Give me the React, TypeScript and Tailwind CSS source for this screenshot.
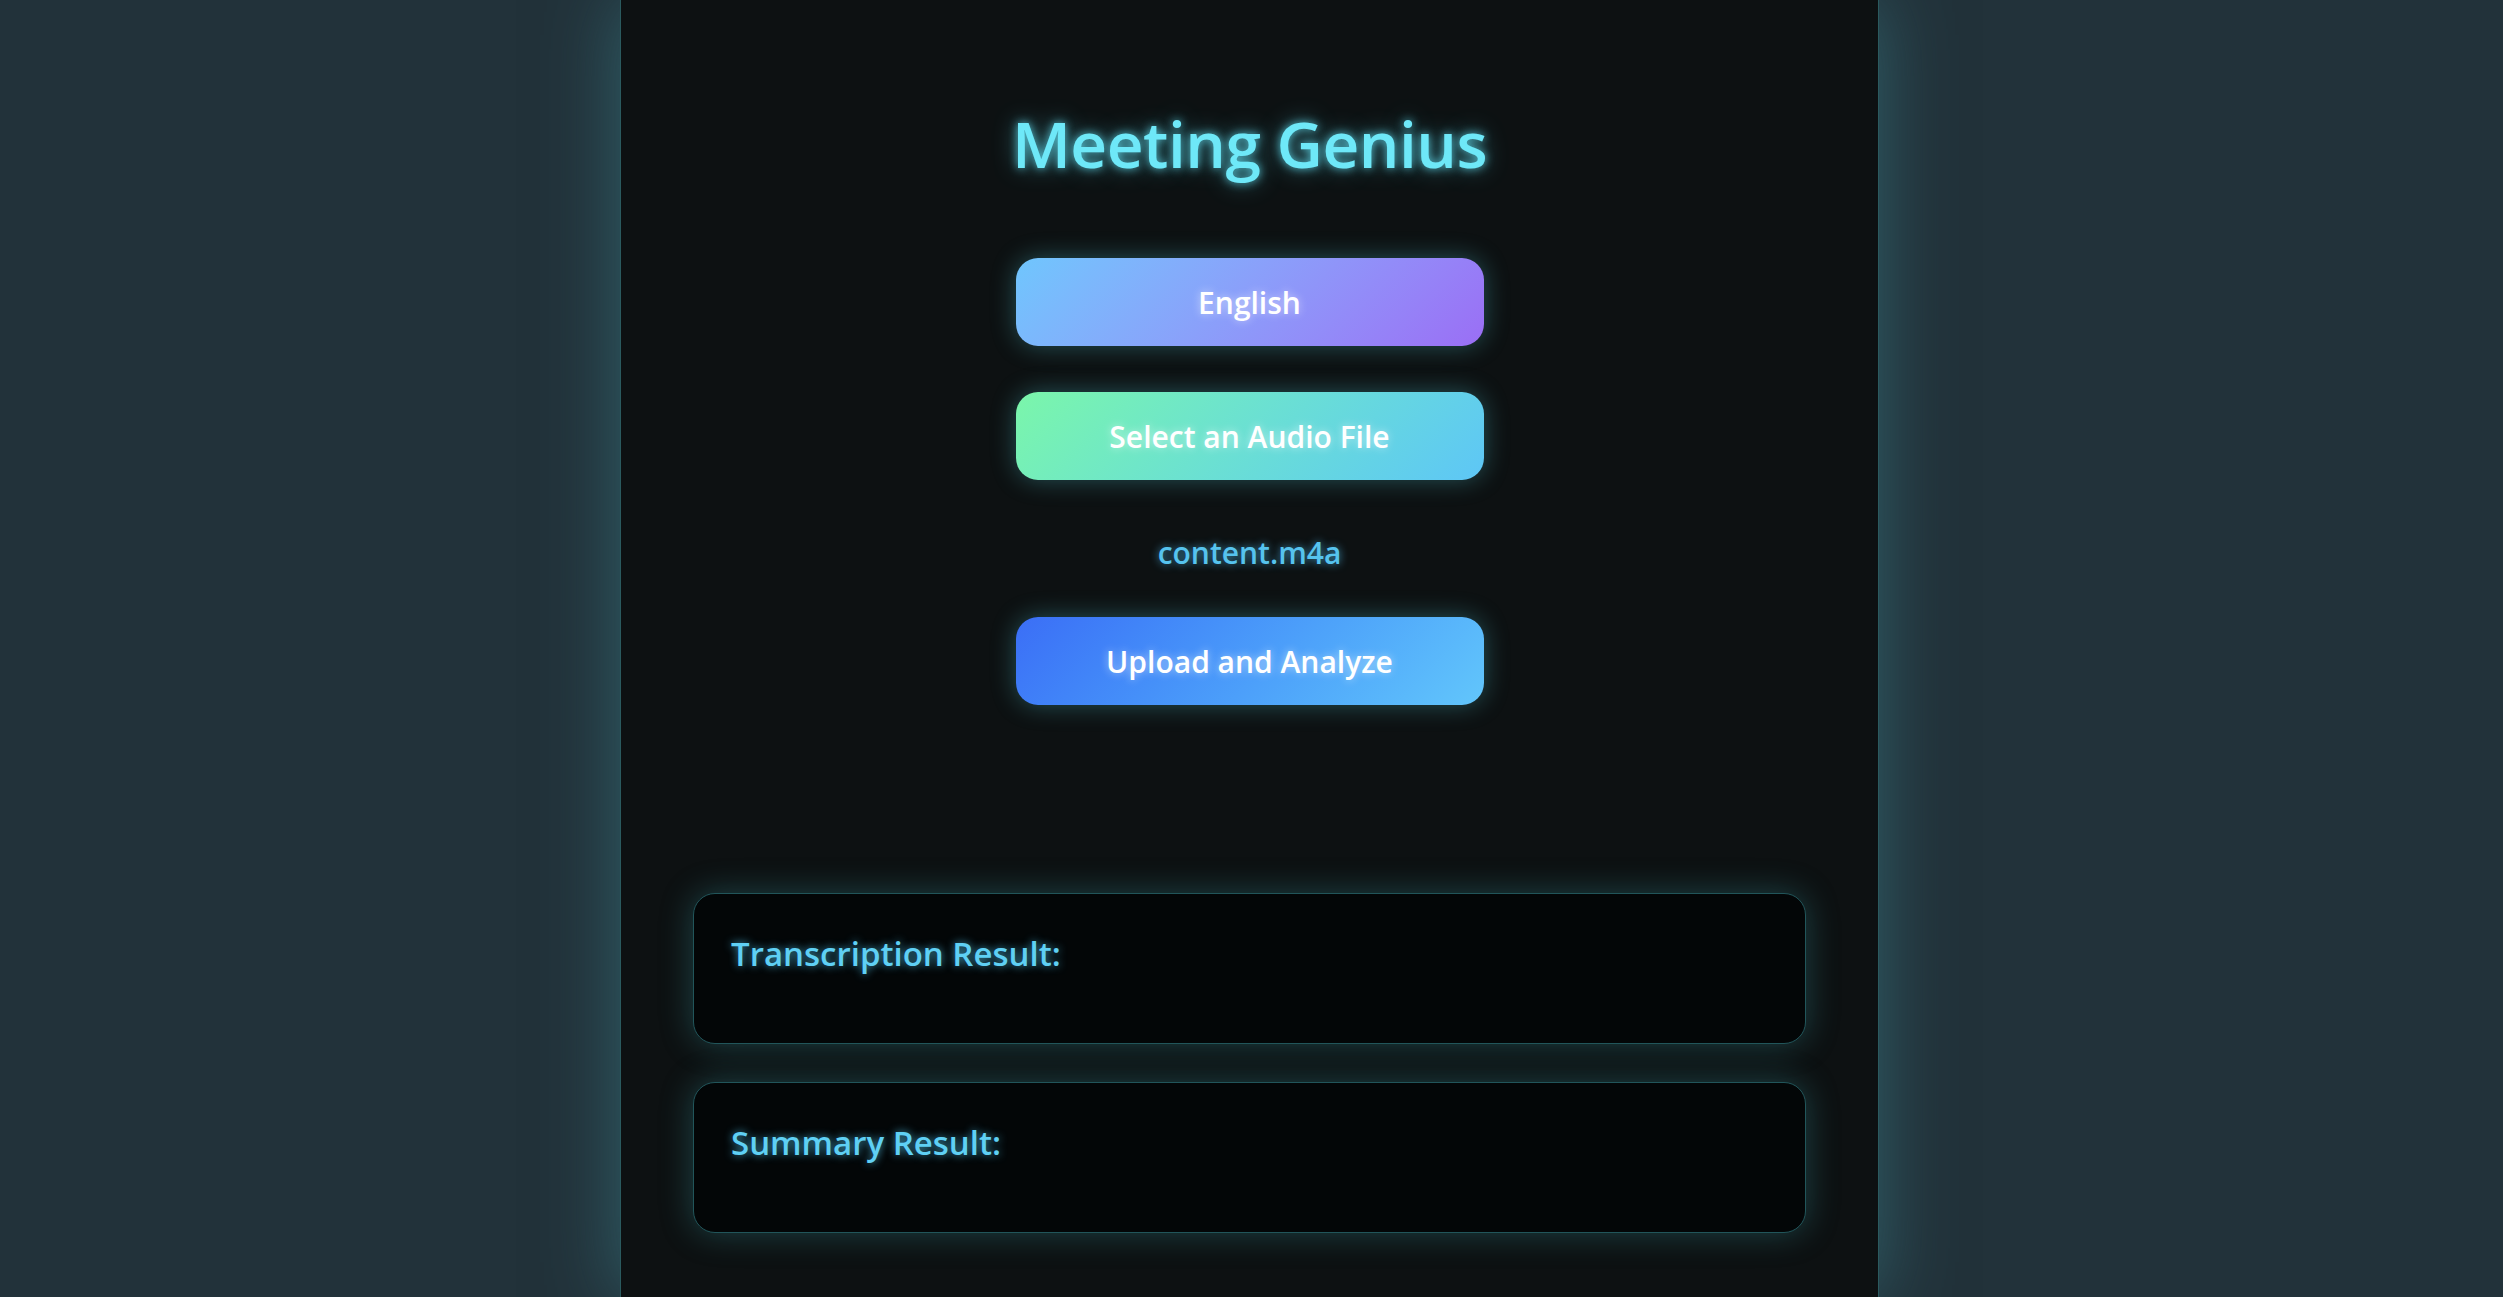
import React from 'react';

const font = { fontFamily: '"Open Sans", "Noto Sans", sans-serif' };

function GlowButton({ label, gradient }: { label: string; gradient: string }) {
  return (
    <button
      className={`w-[468px] h-[88px] rounded-[22px] text-[30px] font-semibold text-white bg-linear-135 ${gradient} shadow-[0_0_24px_rgba(80,190,200,0.38)] [text-shadow:0_0_8px_rgba(255,255,255,0.55)]`}
    >
      {label}
    </button>
  );
}

function ResultCard({ title }: { title: string }) {
  return (
    <div className="w-full h-[151px] rounded-[22px] border border-[#21555a] bg-[#030607] px-[37px] pt-[40px] shadow-[0_0_32px_rgba(60,160,170,0.35)]">
      <h3 className="text-[33px] leading-[1.2] font-semibold text-[#5fd0f4] [text-shadow:0_0_9px_rgba(80,200,240,0.8)]">
        {title}
      </h3>
    </div>
  );
}

export default function App() {
  return (
    <div className="min-h-screen bg-[#22323a] flex justify-center pr-[4px]" style={font}>
      <div className="w-[1259px] min-h-screen bg-[#0d1112] border-x border-[#2a5a5e] shadow-[0_0_70px_rgba(60,135,145,0.55)] px-[72px] pt-[112px] pb-[60px] flex flex-col items-center">
        <h1 className="text-[64px] leading-none font-semibold tracking-[-0.5px] text-[#6ee8f8] [text-shadow:0_0_10px_rgba(100,230,250,0.85),0_0_24px_rgba(100,230,250,0.45)]">
          Meeting Genius
        </h1>

        <div className="mt-[82px] flex flex-col items-center gap-[46px]">
          <GlowButton label="English" gradient="from-[#6fc6fd] to-[#9a6ef5]" />
          <GlowButton label="Select an Audio File" gradient="from-[#7bf6aa] to-[#5ec6f6]" />
        </div>

        <p className="mt-[55px] text-[30px] leading-[1.2] font-semibold text-[#56c3ee] [text-shadow:0_0_8px_rgba(80,190,240,0.75)]">
          content.m4a
        </p>

        <div className="mt-[46px]">
          <GlowButton label="Upload and Analyze" gradient="from-[#3b6ef6] to-[#62c6fb]" />
        </div>

        <div className="mt-[188px] w-full flex flex-col gap-[38px]">
          <ResultCard title="Transcription Result:" />
          <ResultCard title="Summary Result:" />
        </div>
      </div>
    </div>
  );
}
